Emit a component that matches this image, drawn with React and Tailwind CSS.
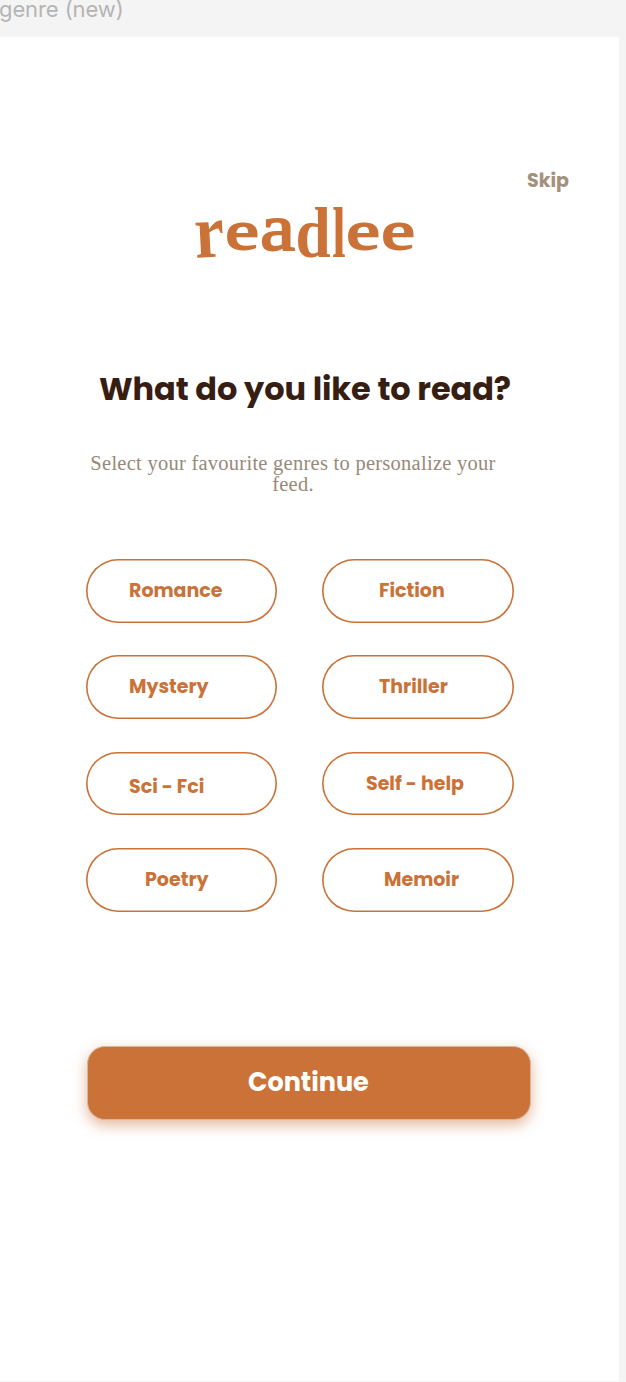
const logoLetters = [
  { char: "r", box: "w-[30px]", glyph: "text-[76px] font-bold scale-x-[0.88] translate-y-[7px] -rotate-3" },
  { char: "e", box: "w-[36px]", glyph: "text-[55px] scale-x-[1.36] -translate-y-px [-webkit-text-stroke:2px_#ca7237]" },
  { char: "a", box: "w-[35px]", glyph: "text-[66px] scale-x-[1.18] [-webkit-text-stroke:2px_#ca7237]" },
  { char: "d", box: "w-[36px]", glyph: "text-[72px] font-bold scale-x-[0.88] translate-y-[7px]" },
  { char: "l", box: "w-[15px]", glyph: "text-[71px] font-bold scale-x-[0.68] translate-y-[7px]" },
  { char: "e", box: "w-[35px]", glyph: "text-[55px] scale-x-[1.36] -translate-y-px [-webkit-text-stroke:2px_#ca7237]" },
  { char: "e", box: "w-[35px]", glyph: "text-[55px] scale-x-[1.36] -translate-y-px [-webkit-text-stroke:2px_#ca7237]" },
];

const genres = [
  { name: "Romance", place: "pl-[43px] pt-[20px]" },
  { name: "Fiction", place: "pl-[56.6px] pt-[20px]" },
  { name: "Mystery", place: "pl-[43px] pt-[20px]" },
  { name: "Thriller", place: "pl-[56.6px] pt-[20px]" },
  { name: "Sci - Fci", place: "pl-[43px] pt-[23px]" },
  { name: "Self - help", place: "pl-[43.6px] pt-[20px]" },
  { name: "Poetry", place: "pl-[59px] pt-[20px]" },
  { name: "Memoir", place: "pl-[61.6px] pt-[20px]" },
];

function Logo() {
  return (
    <div aria-label="readlee" className="flex h-[70px] items-baseline pl-[194px] font-['Liberation_Serif',serif] text-[#ca7237]">
      {logoLetters.map((letter, i) => (
        <span key={i} className={`flex justify-center leading-[62px] ${letter.box}`}>
          <span className={`inline-block ${letter.glyph}`}>{letter.char}</span>
        </span>
      ))}
    </div>
  );
}

function Genre({ name, place }) {
  return (
    <button className={`flex h-[63.7px] w-[191.4px] items-start whitespace-nowrap rounded-full text-[19px] font-bold leading-6 text-[#ca7237] shadow-[inset_0_0_0_1.6px_#ca7237] ${place}`}>
      {name}
    </button>
  );
}

export default function App() {
  return (
    <div className="flex h-[1382px] w-[626px] flex-col overflow-hidden bg-[#f4f4f4] font-['Poppins','Inter',sans-serif]">
      <div className="h-[37px] shrink-0 whitespace-nowrap font-['Inter',sans-serif] text-[22px] leading-[18px] tracking-[-0.1px] text-[#b5b5b5]">
        <span className="-ml-px">genre (new)</span>
      </div>
      <main className="flex h-[1344px] w-[619px] shrink-0 flex-col rounded-r-[2px] bg-white pt-[132px]">
        <button className="ml-[527px] h-6 w-[60px] text-left text-[19px] font-bold leading-6 text-[#a4907c]">Skip</button>
        <Logo />
        <h1 className="ml-[99px] mt-[106px] h-10 whitespace-nowrap text-[32px] font-bold leading-10 tracking-[-0.08px] text-[#371e12]">
          What do you like to read?
        </h1>
        <p className="ml-[83px] mt-[44px] h-[42px] w-[420px] whitespace-nowrap text-center font-['Liberation_Serif',serif] text-[20.5px] leading-[21px] tracking-[0.26px] text-[#97897a]">
          Select your favourite genres to personalize your
          <br />
          feed.
        </p>
        <div className="ml-[86px] mt-16 grid w-[427.4px] grid-cols-[191px_191px] justify-between gap-y-[32.6px]">
          {genres.map((genre) => (
            <Genre key={genre.name} {...genre} />
          ))}
        </div>
        <button className="ml-[87px] mt-[134.4px] flex h-[74px] w-[444px] items-center rounded-[18px] border border-[#d3b8a4] bg-[#ca7237] pb-[2px] pl-[160px] text-[25.5px] font-bold leading-8 text-white shadow-[0_5px_14px_rgba(202,114,55,0.5)]">
          Continue
        </button>
      </main>
    </div>
  );
}
